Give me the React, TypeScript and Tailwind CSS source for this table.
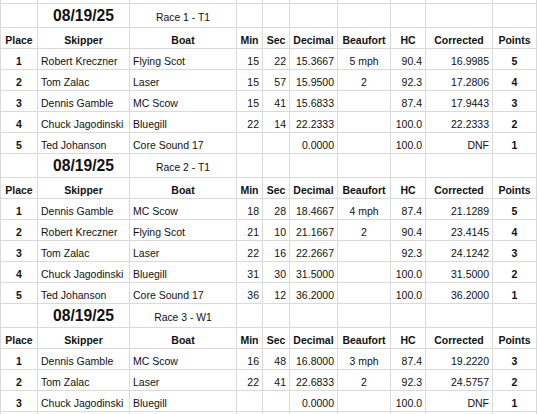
import React from "react";

type Row = [string, string, string, string, string, string, string, string, string, string];

const races: { title: string; rows: Row[] }[] = [
  {
    title: "Race 1 - T1",
    rows: [
      ["1", "Robert Kreczner", "Flying Scot", "15", "22", "15.3667", "5 mph", "90.4", "16.9985", "5"],
      ["2", "Tom Zalac", "Laser", "15", "57", "15.9500", "2", "92.3", "17.2806", "4"],
      ["3", "Dennis Gamble", "MC Scow", "15", "41", "15.6833", "", "87.4", "17.9443", "3"],
      ["4", "Chuck Jagodinski", "Bluegill", "22", "14", "22.2333", "", "100.0", "22.2333", "2"],
      ["5", "Ted Johanson", "Core Sound 17", "", "", "0.0000", "", "100.0", "DNF", "1"],
    ],
  },
  {
    title: "Race 2 - T1",
    rows: [
      ["1", "Dennis Gamble", "MC Scow", "18", "28", "18.4667", "4 mph", "87.4", "21.1289", "5"],
      ["2", "Robert Kreczner", "Flying Scot", "21", "10", "21.1667", "2", "90.4", "23.4145", "4"],
      ["3", "Tom Zalac", "Laser", "22", "16", "22.2667", "", "92.3", "24.1242", "3"],
      ["4", "Chuck Jagodinski", "Bluegill", "31", "30", "31.5000", "", "100.0", "31.5000", "2"],
      ["5", "Ted Johanson", "Core Sound 17", "36", "12", "36.2000", "", "100.0", "36.2000", "1"],
    ],
  },
  {
    title: "Race 3 - W1",
    rows: [
      ["1", "Dennis Gamble", "MC Scow", "16", "48", "16.8000", "3 mph", "87.4", "19.2220", "3"],
      ["2", "Tom Zalac", "Laser", "22", "41", "22.6833", "2", "92.3", "24.5757", "2"],
      ["3", "Chuck Jagodinski", "Bluegill", "", "", "0.0000", "", "100.0", "DNF", "1"],
    ],
  },
];

const headers = ["Place", "Skipper", "Boat", "Min", "Sec", "Decimal", "Beaufort", "HC", "Corrected", "Points"];

// alignment per column for data rows
const align = [
  "justify-center font-bold",
  "justify-start pl-[3px]",
  "justify-start pl-[3px]",
  "justify-end pr-[3px]",
  "justify-end pr-[3px]",
  "justify-end pr-[3px]",
  "justify-center",
  "justify-end pr-[3px]",
  "justify-end pr-[3px]",
  "justify-center font-bold",
];

const cellBase = "flex items-end border-r border-b border-[#dadada] whitespace-nowrap overflow-hidden";

function Strip({ h }: { h: string }) {
  return (
    <>
      {headers.map((_, i) => (
        <div key={i} className={`${cellBase} ${h}`} />
      ))}
    </>
  );
}

export default function App() {
  return (
    <div className="w-[538px] h-[414px] overflow-hidden bg-white">
      <div
        className="grid grid-cols-[37px_92px_107px_26px_27px_48px_53px_35px_67px_44px] w-[537px] border-l border-[#dadada] text-[10.5px] leading-[12px] text-[#111]"
        style={{ fontFamily: '"Liberation Sans", Arial, sans-serif' }}
      >
        <Strip h="h-[4px]" />
        {races.map((race, ri) => (
          <React.Fragment key={ri}>
            {/* title row */}
            <div className={`${cellBase} h-[24px]`} />
            <div className={`${cellBase} h-[24px] justify-center pb-[2px]`}>
              <span className="text-[15.7px] leading-[18px] font-bold">08/19/25</span>
            </div>
            <div className={`${cellBase} h-[24px] justify-center pb-[3px]`}>
              <span className="text-[10.4px]">{race.title}</span>
            </div>
            {Array.from({ length: 7 }).map((_, i) => (
              <div key={i} className={`${cellBase} h-[24px]`} />
            ))}
            {/* header row */}
            {headers.map((h, i) => (
              <div key={h} className={`${cellBase} h-[21px] justify-center font-bold pb-[2px]`}>
                {h}
              </div>
            ))}
            {race.rows.map((row, r) =>
              row.map((v, c) => (
                <div key={`${r}-${c}`} className={`${cellBase} h-[21px] pb-[2px] ${align[c]}`}>
                  {v}
                </div>
              ))
            )}
          </React.Fragment>
        ))}
        <Strip h="h-[4px]" />
      </div>
    </div>
  );
}
